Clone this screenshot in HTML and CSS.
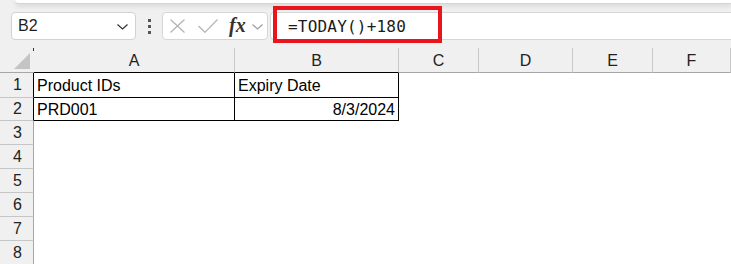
FILE: index.html
```html
<!DOCTYPE html>
<html>
<head>
<meta charset="utf-8">
<link rel="stylesheet" href="styles.css">
</head>
<body>
<div class="toolbar">
  <div class="ribbon-edge"></div>
  <div class="fbar">
    <div class="namebox">
      <span class="nb-text">B2</span>
      <svg class="nb-chev" width="11" height="6" viewBox="0 0 11 6"><path d="M0.5 0.5 L5.5 5 L10.5 0.5" fill="none" stroke="#333" stroke-width="1.2"/></svg>
    </div>
    <div class="dots"><i></i><i></i><i></i></div>
    <div class="fxbox">
      <svg class="ico-x" width="15" height="14" viewBox="0 0 15 14"><path d="M0.5 0.5 L14.5 13.5 M14.5 0.5 L0.5 13.5" stroke="#b3b3b3" stroke-width="1.2" fill="none"/></svg>
      <svg class="ico-check" width="20" height="14" viewBox="0 0 20 14"><path d="M0.5 7 L7 13.3 L19.5 0.5" stroke="#b3b3b3" stroke-width="1.2" fill="none"/></svg>
      <span class="fx">fx</span>
      <svg class="fx-chev" width="11" height="6" viewBox="0 0 11 6"><path d="M0.5 0.5 L5.5 5 L10.5 0.5" fill="none" stroke="#9a9a9a" stroke-width="1.1"/></svg>
    </div>
    <div class="finput">
      <span class="ftext">=TODAY()+180</span>
      <div class="highlight"></div>
    </div>
  </div>
</div>

<div class="sheet">
  <div class="corner"><svg class="tri" width="16" height="16" viewBox="0 0 16 16"><path d="M16 0 L16 16 L0 16 Z" fill="#c4c4c4"/></svg></div>
  <div class="ch chb">A</div>
  <div class="ch chb">B</div>
  <div class="ch">C</div>
  <div class="ch">D</div>
  <div class="ch">E</div>
  <div class="ch">F</div>

  <div class="rh rhb">1</div>
  <div class="cell b">Product IDs</div>
  <div class="cell b">Expiry Date</div>
  <div class="cell"></div><div class="cell"></div><div class="cell"></div><div class="cell"></div>

  <div class="rh rhb">2</div>
  <div class="cell b">PRD001</div>
  <div class="cell b num">8/3/2024</div>
  <div class="cell"></div><div class="cell"></div><div class="cell"></div><div class="cell"></div>

  <div class="rh">3</div><div class="cell"></div><div class="cell"></div><div class="cell"></div><div class="cell"></div><div class="cell"></div><div class="cell"></div>
  <div class="rh">4</div><div class="cell"></div><div class="cell"></div><div class="cell"></div><div class="cell"></div><div class="cell"></div><div class="cell"></div>
  <div class="rh">5</div><div class="cell"></div><div class="cell"></div><div class="cell"></div><div class="cell"></div><div class="cell"></div><div class="cell"></div>
  <div class="rh">6</div><div class="cell"></div><div class="cell"></div><div class="cell"></div><div class="cell"></div><div class="cell"></div><div class="cell"></div>
  <div class="rh">7</div><div class="cell"></div><div class="cell"></div><div class="cell"></div><div class="cell"></div><div class="cell"></div><div class="cell"></div>
  <div class="rh">8</div><div class="cell"></div><div class="cell"></div><div class="cell"></div><div class="cell"></div><div class="cell"></div><div class="cell"></div>
</div>
</body>
</html>
```

FILE: styles.css
```css
* { box-sizing: border-box; }
html, body { margin: 0; padding: 0; background: #fff; }
body {
  width: 731px;
  height: 264px;
  overflow: hidden;
  font-family: "Liberation Sans", Arial, sans-serif;
  color: #000;
}

.toolbar {
  height: 48px;
  background: #f0f0f0;
  overflow: hidden;
}
.ribbon-edge {
  height: 4px;
  margin-left: 15px;
  background: #fff;
  border-bottom: 1px solid #d4d4d4;
  border-bottom-left-radius: 4px;
  box-shadow: 0 2px 5px rgba(0,0,0,0.12);
}
.fbar {
  margin-top: 8px;
  height: 28px;
  display: flex;
  align-items: stretch;
}
.namebox {
  margin-left: 11px;
  width: 125px;
  background: #fff;
  border: 1px solid #d2d2d2;
  border-radius: 4px;
  display: flex;
  align-items: center;
  justify-content: space-between;
  padding: 0 7px 0 6px;
}
.nb-text {
  font-size: 16px;
  color: #1e1e1e;
}
.nb-chev { margin-top: 2px; }

.dots {
  width: 26px;
  display: flex;
  flex-direction: column;
  align-items: center;
  justify-content: center;
  gap: 3px;
}
.dots i {
  display: block;
  width: 3px;
  height: 3px;
  background: #555;
}

.fxbox {
  width: 106px;
  background: #fff;
  border: 1px solid #d6d6d6;
  border-radius: 4px;
  display: flex;
  align-items: center;
  padding-left: 7px;
}
.ico-x { margin-right: 13px; }
.ico-check { margin-right: 11px; }
.fx {
  font-family: "Liberation Serif", "Times New Roman", serif;
  font-style: italic;
  font-weight: bold;
  font-size: 20px;
  color: #333;
  margin-right: 6px;
  margin-top: -2px;
}
.fx-chev { margin-top: 2px; }

.finput {
  flex: 1;
  margin-left: 2px;
  background: #fff;
  border: 1px solid #d6d6d6;
  border-right: none;
  border-radius: 4px 0 0 4px;
  position: relative;
  display: flex;
  align-items: center;
  padding-left: 17px;
}
.ftext {
  font-family: "DejaVu Sans Mono", "Liberation Mono", monospace;
  font-size: 16px;
  color: #1a1a1a;
  letter-spacing: 0.2px;
}
.highlight {
  position: absolute;
  left: 2px;
  top: -7px;
  width: 169px;
  height: 37px;
  border: 4px solid #e8141e;
}

.sheet {
  display: grid;
  grid-template-columns: 34px 201px 164px 80px 94px 80px 1fr;
  grid-template-rows: 25px 25px 23px repeat(6, 24px);
}
.corner {
  background: #f0f0f0;
  border-bottom: 1px solid #a6a6a6;
  position: relative;
}
.corner::after {
  content: "";
  position: absolute;
  right: 0;
  top: 0;
  width: 1px;
  height: 3px;
  background: #333;
}
.tri {
  position: absolute;
  right: 4px;
  bottom: 3px;
}
.ch {
  background: #f0f0f0;
  border-right: 1px solid #c8c8c8;
  border-bottom: 1px solid #a6a6a6;
  display: flex;
  align-items: center;
  justify-content: center;
  font-size: 16px;
  color: #222;
  padding-top: 2px;
}
.ch.chb { border-bottom-color: #000; }
.rh {
  background: #f0f0f0;
  border-right: 1px solid #a6a6a6;
  border-bottom: 1px solid #c6c6c6;
  display: flex;
  align-items: center;
  justify-content: center;
  font-size: 16px;
  color: #222;
  padding-left: 2px;
}
.rh.rhb { border-right-color: #000; }
.cell {
  background: #fff;
  font-size: 16px;
  display: flex;
  align-items: center;
  padding: 1px 3px 0 3px;
  white-space: nowrap;
}
.cell.b {
  border-right: 1px solid #000;
  border-bottom: 1px solid #000;
}
.cell.num { justify-content: flex-end; }
```
